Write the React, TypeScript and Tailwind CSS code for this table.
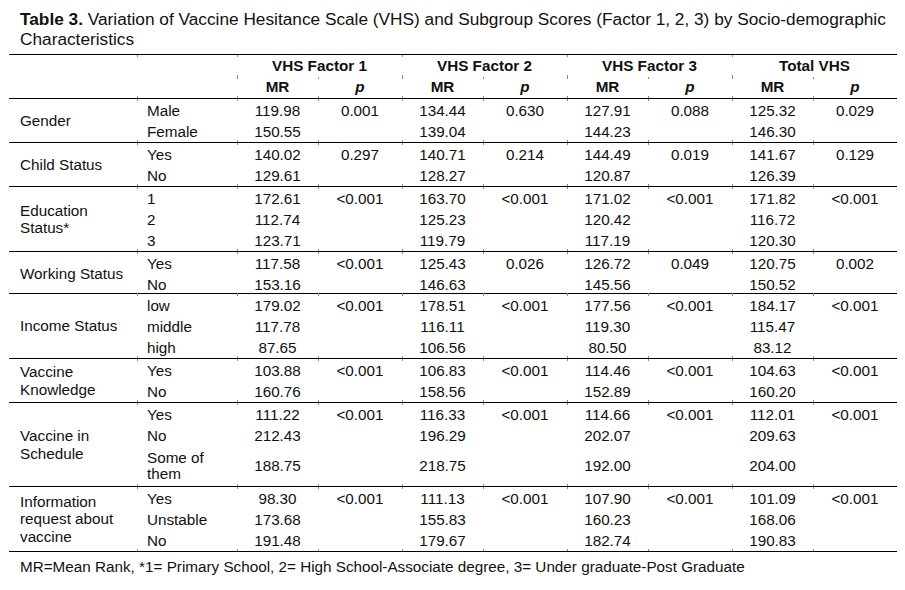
import React from "react";

type Row = { sub: React.ReactNode; v: string[]; h?: number };
type Group = { label: React.ReactNode; h: number; rows: Row[] };

const E = "";
const groups: Group[] = [
  {
    label: "Gender",
    h: 44,
    rows: [
      { sub: "Male", v: ["119.98", "0.001", "134.44", "0.630", "127.91", "0.088", "125.32", "0.029"] },
      { sub: "Female", v: ["150.55", E, "139.04", E, "144.23", E, "146.30", E] },
    ],
  },
  {
    label: "Child Status",
    h: 44,
    rows: [
      { sub: "Yes", v: ["140.02", "0.297", "140.71", "0.214", "144.49", "0.019", "141.67", "0.129"] },
      { sub: "No", v: ["129.61", E, "128.27", E, "120.87", E, "126.39", E] },
    ],
  },
  {
    label: (
      <>
        Education
        <br />
        Status*
      </>
    ),
    h: 65,
    rows: [
      { sub: "1", v: ["172.61", "<0.001", "163.70", "<0.001", "171.02", "<0.001", "171.82", "<0.001"] },
      { sub: "2", v: ["112.74", E, "125.23", E, "120.42", E, "116.72", E] },
      { sub: "3", v: ["123.71", E, "119.79", E, "117.19", E, "120.30", E] },
    ],
  },
  {
    label: "Working Status",
    h: 42,
    rows: [
      { sub: "Yes", v: ["117.58", "<0.001", "125.43", "0.026", "126.72", "0.049", "120.75", "0.002"] },
      { sub: "No", v: ["153.16", E, "146.63", E, "145.56", E, "150.52", E] },
    ],
  },
  {
    label: "Income Status",
    h: 65,
    rows: [
      { sub: "low", v: ["179.02", "<0.001", "178.51", "<0.001", "177.56", "<0.001", "184.17", "<0.001"] },
      { sub: "middle", v: ["117.78", E, "116.11", E, "119.30", E, "115.47", E] },
      { sub: "high", v: ["87.65", E, "106.56", E, "80.50", E, "83.12", E] },
    ],
  },
  {
    label: (
      <>
        Vaccine
        <br />
        Knowledge
      </>
    ),
    h: 44,
    rows: [
      { sub: "Yes", v: ["103.88", "<0.001", "106.83", "<0.001", "114.46", "<0.001", "104.63", "<0.001"] },
      { sub: "No", v: ["160.76", E, "158.56", E, "152.89", E, "160.20", E] },
    ],
  },
  {
    label: (
      <>
        Vaccine in
        <br />
        Schedule
      </>
    ),
    h: 84,
    rows: [
      { sub: "Yes", v: ["111.22", "<0.001", "116.33", "<0.001", "114.66", "<0.001", "112.01", "<0.001"] },
      { sub: "No", v: ["212.43", E, "196.29", E, "202.07", E, "209.63", E] },
      {
        sub: (
          <>
            Some of
            <br />
            them
          </>
        ),
        h: 40,
        v: ["188.75", E, "218.75", E, "192.00", E, "204.00", E],
      },
    ],
  },
  {
    label: (
      <>
        Information
        <br />
        request about
        <br />
        vaccine
      </>
    ),
    h: 65,
    rows: [
      { sub: "Yes", v: ["98.30", "<0.001", "111.13", "<0.001", "107.90", "<0.001", "101.09", "<0.001"] },
      { sub: "Unstable", v: ["173.68", E, "155.83", E, "160.23", E, "168.06", E] },
      { sub: "No", v: ["191.48", E, "179.67", E, "182.74", E, "190.83", E] },
    ],
  },
];

const GRID =
  "grid grid-cols-[128px_100px_81px_84px_81px_84px_81px_84px_81px_84px]";
const TICK =
  "[background:linear-gradient(#8a8a8a,#8a8a8a)_left_top/1px_2px_no-repeat,linear-gradient(#8a8a8a,#8a8a8a)_left_bottom/1px_2px_no-repeat]";

function GroupRow({ g }: { g: Group }) {
  const cols = Array.from({ length: 9 }, (_, i) => i);
  return (
    <div className={`${GRID} border-b border-black`} style={{ height: g.h }}>
      <div className="flex items-center pl-[11px] leading-[17.5px]">
        <div>{g.label}</div>
      </div>
      {cols.map((ci) => (
        <div key={ci} className={`flex flex-col pt-[1px] ${TICK}`}>
          {g.rows.map((r, ri) => (
            <div
              key={ri}
              className={
                ci === 0
                  ? "flex items-center pl-[10px] leading-[16px]"
                  : "flex items-center justify-center leading-[16px]"
              }
              style={{ height: r.h ?? 21 }}
            >
              <span>{ci === 0 ? r.sub : r.v[ci - 1]}</span>
            </div>
          ))}
        </div>
      ))}
    </div>
  );
}

export default function App() {
  const heads = ["VHS Factor 1", "VHS Factor 2", "VHS Factor 3", "Total VHS"];
  return (
    <div
      className="w-[905px] h-[590px] bg-white text-[#111111] pt-[9px]"
      style={{ fontFamily: '"Liberation Sans", Arial, sans-serif' }}
    >
      <div className="pl-[20px] text-[17.25px] leading-[20px] whitespace-nowrap mb-[5px]">
        <span className="font-bold">Table 3.</span> Variation of Vaccine Hesitance Scale (VHS) and
        Subgroup Scores (Factor 1, 2, 3) by Socio-demographic
        <br />
        Characteristics
      </div>
      <div className="ml-[9px] w-[888px] text-[15.25px]">
        <div className={`${GRID} border-t border-b border-black h-[45px] font-bold`}>
          <div className="row-span-2" />
          <div className={`row-span-2 ${TICK}`} />
          {heads.map((h) => (
            <div
              key={h}
              className={`col-span-2 h-[22px] flex items-center justify-center ${TICK}`}
            >
              {h}
            </div>
          ))}
          {heads.map((h) => (
            <React.Fragment key={h + "sub"}>
              <div className={`h-[21px] flex items-center justify-center ${TICK}`}>MR</div>
              <div className={`h-[21px] flex items-center justify-center italic ${TICK}`}>p</div>
            </React.Fragment>
          ))}
        </div>
        {groups.map((g, i) => (
          <GroupRow key={i} g={g} />
        ))}
      </div>
      <div className="pl-[20px] mt-[5px] text-[15.25px] leading-[20px] whitespace-nowrap">
        MR=Mean Rank, *1= Primary School, 2= High School-Associate degree, 3= Under
        graduate-Post Graduate
      </div>
    </div>
  );
}
